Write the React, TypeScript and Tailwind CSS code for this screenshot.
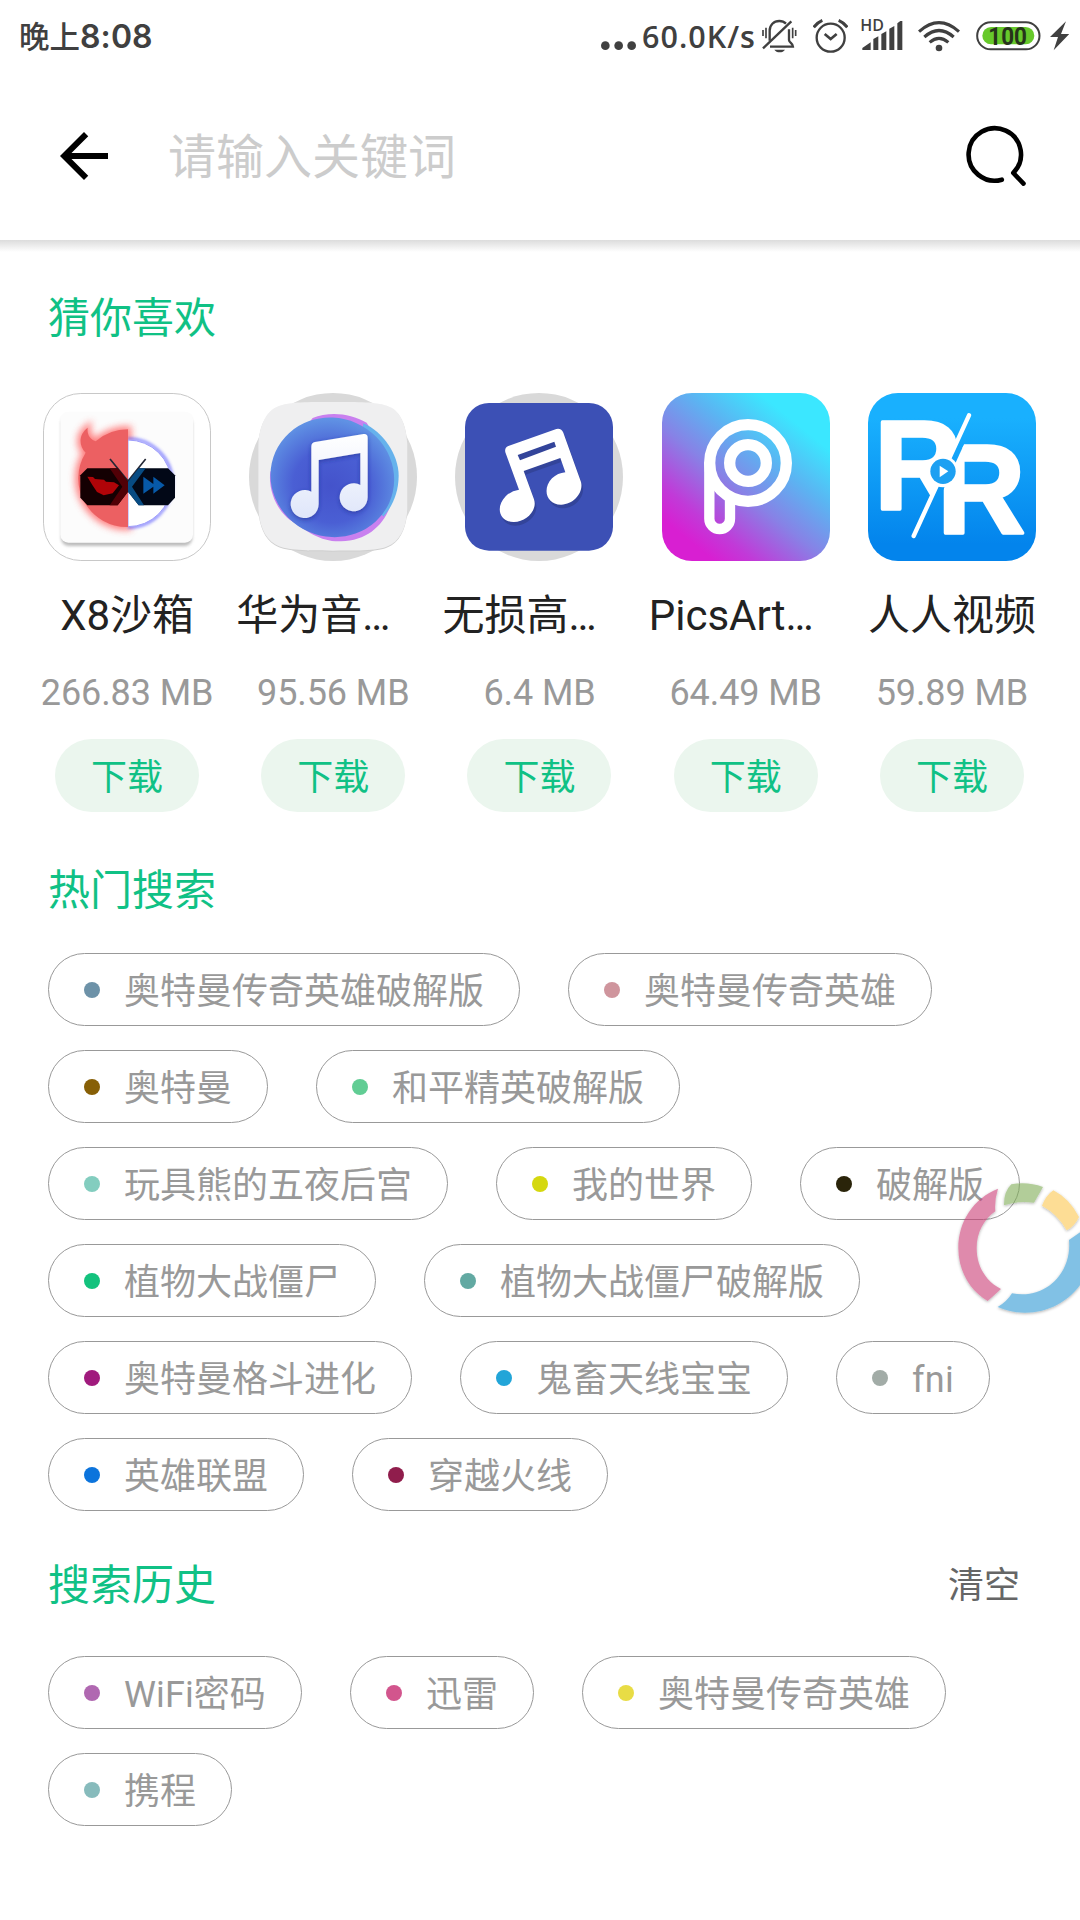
import React from "react";

const CJK = "font-['Roboto','Noto_Sans_CJK_SC',sans-serif]";

function StatusBar() {
  return (
    <div className="flex h-[72px] items-start pt-[18px] pl-[19px] pr-[11px] text-[#404040]">
      <div className="flex h-9 items-center whitespace-nowrap pt-0.5 font-['Inter','Noto_Sans_CJK_SC',sans-serif] font-medium">
        <span className="text-[30.500px] leading-9">晚上</span>
        <span className="text-[32px] font-semibold leading-9 tracking-[0.1px]">8:08</span>
      </div>
      <div className="ml-auto flex h-9 items-center">
        <svg className="mr-1.5 h-9 w-[35px]" viewBox="65 54 105 108" fill="currentColor">
          <circle cx="78" cy="137" r="13" />
          <circle cx="118" cy="137" r="13" />
          <circle cx="157" cy="137" r="13" />
        </svg>
        <span className="w-[112px] whitespace-nowrap font-['Open_Sans',sans-serif] text-[30.500px] font-semibold leading-9 tracking-[1px]">60.0K/s</span>
        <svg className="ml-2 h-9 w-[35px]" viewBox="548 54 105 108" fill="none" stroke="currentColor" strokeWidth="7">
          <path d="M571 122V92c0-17 12-29 29-29 8 0 15 3 20 8" />
          <path d="M551 145 636 64" />
          <path d="M629 88v32c0 8 12 10 12 20H572" />
          <path d="M585 149h32c-3 5-9 8-16 8s-13-3-16-8z" fill="currentColor" stroke="none" />
          <path d="M551 90v18M560 83v32M640 83v32M649 90v18" strokeWidth="5" />
        </svg>
        <svg className="ml-4 h-9 w-[35px]" viewBox="700 54 105 108" fill="none" stroke="currentColor" strokeWidth="7">
          <circle cx="753" cy="113" r="42" />
          <path d="M735 102 753 117 771 102" strokeWidth="8" />
          <path d="M702 82Q712 68 728 61M777 61Q793 68 803 82" strokeWidth="9" />
        </svg>
        <svg className="ml-[13px] h-9 w-[42px] overflow-visible" viewBox="842 54 126 108" fill="currentColor">
          <text x="840" y="93" fontSize="46" fontWeight="600" fontFamily="Open Sans" textLength="71" lengthAdjust="spacingAndGlyphs">HD</text>
          <path d="M846 150v-6l25-17v23zM879 150v-33l15-8v41zM903 150v-48l15-8v56zM927 150V86l15-8v72zM951 150V70l9-7h6v87z" />
        </svg>
        <svg className="ml-[15px] h-9 w-[42px]" viewBox="1014 54 126 108" fill="none" stroke="currentColor" strokeWidth="9.5">
          <path d="M1017 95Q1077 41 1137 95" />
          <path d="M1033 111Q1077 72 1121 111" />
          <path d="M1049 127Q1077 103 1105 127" />
          <circle cx="1077" cy="144" r="10" fill="currentColor" stroke="none" />
        </svg>
        <svg className="ml-4 h-9 w-[65px]" viewBox="1187 54 195 108">
          <rect x="1190.500" y="67" width="187" height="81" rx="40.500" fill="#fff" stroke="currentColor" strokeWidth="6" />
          <rect x="1206" y="81" width="156" height="52" rx="26" fill="#67c92b" />
          <text x="1224" y="134" fontSize="77" fontWeight="700" fontFamily="Roboto" fill="#26341b" textLength="116" lengthAdjust="spacingAndGlyphs">100</text>
        </svg>
        <svg className="ml-[9px] h-9 w-[19px]" viewBox="1410 54 57 108" fill="currentColor">
          <path d="M1458 64 1410 111h24l-13 40 47-49h-25z" />
        </svg>
      </div>
    </div>
  );
}

function Header() {
  return (
    <header className="flex h-[168px] items-start pt-12 pl-12">
      <svg className="size-[72px]" viewBox="0 0 24 24" fill="#000">
        <path d="M20 11H7.830l5.590-5.590L12 4l-8 8 8 8 1.410-1.410L7.830 13H20v-2z" />
      </svg>
      <div className="ml-12 text-5xl leading-[76px] text-[#cccccc]">请输入关键词</div>
      <svg className="ml-auto mr-12 size-[72px]" viewBox="960 120 72 72" fill="none" stroke="#000" strokeWidth="4.600" strokeLinecap="round" strokeLinejoin="round">
        <path d="M1001.800 179.700A26.200 26.200 0 1 1 1013.300 173L1023.500 183.600" />
      </svg>
    </header>
  );
}

function SandboxIcon() {
  return (
    <svg className="size-[168px]" viewBox="40 39 504 504">
      <defs>
        <filter id="glow" x="-30%" y="-30%" width="160%" height="160%"><feGaussianBlur stdDeviation="11" /></filter>
        <filter id="soft" x="-30%" y="-30%" width="160%" height="160%"><feGaussianBlur stdDeviation="5" /></filter>
      </defs>
      <rect x="41.500" y="40.500" width="501" height="501" rx="112" fill="#fff" stroke="#c8c8c8" strokeWidth="3" />
      <rect x="94" y="106" width="394" height="392" rx="24" fill="#999" opacity=".65" filter="url(#soft)" />
      <rect x="92" y="95" width="398" height="393" rx="24" fill="#fcfcfc" />
      <path d="M295 148V441A146 146 0 0 1 168 218C148 200 145 165 174 143C172 165 180 177 198 184Q240 148 295 148Z" fill="#ff3838" stroke="#ff5050" strokeWidth="20" opacity=".7" filter="url(#glow)" />
      <path d="M295 177A132 132 0 0 1 295 441" fill="#fff" stroke="#4a4aff" strokeWidth="11" opacity=".6" filter="url(#soft)" />
      <path d="M295 180A130 130 0 0 1 295 440Z" fill="#fff" stroke="#9f9ffb" strokeWidth="3" />
      <path d="M295 148V441A146 146 0 0 1 168 218C148 200 145 165 174 143C172 165 180 177 198 184Q240 148 295 148Z" fill="#ec6062" />
      <path d="M241 237 295 303 348 237" fill="none" stroke="#242836" strokeWidth="5" />
      <path d="M152 286 173 265H264L295 305V335L264 376H173L152 353Z" fill="#140002" />
      <path d="M240 265H264L295 305V335L264 376H240L278 320Z" fill="#510006" />
      <path d="M295 305 327 265H415L436 286V353L415 376H327L295 335Z" fill="#020817" />
      <path d="M327 265H348L307 320 343 376H327L295 335V305Z" fill="#074b83" />
      <path d="M173 290 190 291 196 297 223 299 229 305 253 307 268 316 249 340 222 346 202 336 188 315Z" fill="#b00408" />
      <path d="M341 290 371 312V290L405 316 371 341V320L341 341Z" fill="#0759a8" />
    </svg>
  );
}

function HuaweiMusicIcon() {
  return (
    <svg className="size-[168px]" viewBox="657 39 504 504">
      <defs>
        <radialGradient id="hm" cx="52%" cy="57%" r="56%">
          <stop offset="0" stopColor="#4453cb" />
          <stop offset=".55" stopColor="#4a5fd4" />
          <stop offset="1" stopColor="#6092e4" />
        </radialGradient>
        <linearGradient id="hmn" x1="0" y1="0" x2="0" y2="1">
          <stop offset="0" stopColor="#fff" />
          <stop offset="1" stopColor="#dfe6fa" />
        </linearGradient>
        <filter id="hms" x="-20%" y="-20%" width="140%" height="140%"><feDropShadow dx="0" dy="5" stdDeviation="6" floodColor="#1d2c90" floodOpacity=".6" /></filter>
      </defs>
      <circle cx="909" cy="291" r="252" fill="#d9d9d9" />
      <path d="M909 70C1010 68 1055 70 1085 86C1118 104 1130 150 1132 195V390C1130 430 1118 475 1085 496C1055 515 1010 515 909 515C808 515 765 513 735 496C702 476 688 435 685 390V195C687 150 702 104 735 86C765 70 808 68 909 70Z" fill="#cfcfcf" />
      <path d="M909 66C1010 65 1055 67 1085 83C1118 101 1130 150 1132 192V387C1130 430 1118 472 1085 493C1055 512 1010 512 909 512C808 512 765 510 735 493C702 473 688 432 685 387V192C687 150 702 101 735 83C765 67 808 65 909 66Z" fill="#efeff0" />
      <path d="M848 114C895 94 960 98 1010 128L1060 210 1092 340C1076 420 1025 482 933 484C870 486 835 455 780 420C740 390 714 330 721 275Z" fill="#c980ef" />
      <path d="M1000 130C1060 155 1105 225 1106 285C1106 335 1090 375 1060 410L980 300Z" fill="#66b2ec" />
      <ellipse cx="907" cy="292" rx="187" ry="178" fill="url(#hm)" transform="rotate(24 907 292)" />
      <g filter="url(#hms)">
        <path d="M844 200Q844 188 855 186L1001 162Q1013 161 1013 173V352A42 42 0 1 1 991 315V219L866 240V372A42 42 0 1 1 844 335Z" fill="url(#hmn)" />
      </g>
    </svg>
  );
}

function LosslessIcon() {
  return (
    <svg className="size-[168px]" viewBox="48 39 504 504">
      <circle cx="300" cy="291" r="252" fill="#d9d9d9" />
      <rect x="78" y="69" width="444" height="443" rx="72" fill="#3c50b5" />
      <path transform="translate(5 11)" fill="#33449a" d="M199 217Q196 203 208 198L352 147Q367 144 373 158L426 306C434 337 405 373 367 374C323 375 308 327 339 295Q356 279 379 277L364 234 254 273 285 358C296 390 263 425 225 426C181 427 168 381 200 349Q217 332 240 329Z" />
      <path fill="#fff" fillRule="evenodd" d="M199 217Q196 203 208 198L352 147Q367 144 373 158L426 306C434 337 405 373 367 374C323 375 308 327 339 295Q356 279 379 277L364 234 254 273 285 358C296 390 263 425 225 426C181 427 168 381 200 349Q217 332 240 329ZM236 225 243 241 351 200 346 185Z" />
    </svg>
  );
}

function PicsArtIcon() {
  return (
    <svg className="size-[168px]" viewBox="666 39 504 504">
      <defs>
        <linearGradient id="pa" gradientUnits="userSpaceOnUse" x1="745" y1="480" x2="1045" y2="110">
          <stop offset="0" stopColor="#d81fd2" />
          <stop offset=".16" stopColor="#c13ad8" />
          <stop offset=".45" stopColor="#8782e6" />
          <stop offset=".72" stopColor="#5bb4f2" />
          <stop offset="1" stopColor="#3be7ff" />
        </linearGradient>
      </defs>
      <rect x="666" y="39" width="504" height="504" rx="90" fill="url(#pa)" />
      <g fill="none" stroke="#fff">
        <circle cx="924" cy="249" r="115" strokeWidth="34" />
        <circle cx="924" cy="249" r="55" strokeWidth="34" />
        <path d="M808 249V416A31 31 0 0 0 870 416V350" strokeWidth="31" />
      </g>
    </svg>
  );
}

function RenRenIcon() {
  return (
    <svg className="size-[168px]" viewBox="84 39 504 504">
      <defs>
        <linearGradient id="rr" x1="0" y1="0" x2="0" y2="1">
          <stop offset=".15" stopColor="#19b0fe" />
          <stop offset=".9" stopColor="#0384ec" />
        </linearGradient>
        <clipPath id="rrl"><path d="M84 39H417L208 500H84Z" /></clipPath>
        <clipPath id="rrr"><path d="M394 145H600V500H232Z" /></clipPath>
      </defs>
      <rect x="84" y="39" width="504" height="504" rx="90" fill="url(#rr)" />
      <g fill="#fff" stroke="#fff" strokeWidth="10" strokeLinejoin="round" fontFamily="Liberation Sans" fontWeight="700" fontSize="380">
        <g clipPath="url(#rrl)"><text x="103" y="387" textLength="264" lengthAdjust="spacingAndGlyphs">R</text></g>
        <g clipPath="url(#rrr)"><text x="292" y="458" textLength="264" lengthAdjust="spacingAndGlyphs">R</text></g>
      </g>
      <path d="M387 106 221 468" stroke="#fff" strokeWidth="13" strokeLinecap="round" />
      <circle cx="309" cy="275" r="47" fill="#fff" />
      <circle cx="309" cy="274" r="38" fill="#1da0f2" />
      <path d="M299 257 325 274 299 292Z" fill="#fff" />
    </svg>
  );
}

const apps = [
  { name: "X8沙箱", size: "266.83 MB", icon: <SandboxIcon />, clipped: false },
  { name: "华为音…", size: "95.56 MB", icon: <HuaweiMusicIcon />, clipped: true },
  { name: "无损高…", size: "6.4 MB", icon: <LosslessIcon />, clipped: true },
  { name: "PicsArt…", size: "64.49 MB", icon: <PicsArtIcon />, clipped: true },
  { name: "人人视频", size: "59.89 MB", icon: <RenRenIcon />, clipped: false },
];

const hot = [
  ["奥特曼传奇英雄破解版", "bg-[#6d92a8]"],
  ["奥特曼传奇英雄", "bg-[#cf959d]"],
  ["奥特曼", "bg-[#875f06]"],
  ["和平精英破解版", "bg-[#61cd94]"],
  ["玩具熊的五夜后宫", "bg-[#83cdbf]"],
  ["我的世界", "bg-[#d5d80f]"],
  ["破解版", "bg-[#2a240a]"],
  ["植物大战僵尸", "bg-[#13c27d]"],
  ["植物大战僵尸破解版", "bg-[#62a9a2]"],
  ["奥特曼格斗进化", "bg-[#a01a7d]"],
  ["鬼畜天线宝宝", "bg-[#22a5d8]"],
  ["fni", "bg-[#a2aca7]", "tracking-[0.3px]"],
  ["英雄联盟", "bg-[#0c74dc]"],
  ["穿越火线", "bg-[#901d4c]"],
];

const history = [
  ["WiFi密码", "bg-[#b068b1]", "tracking-[0.1px]"],
  ["迅雷", "bg-[#d2558d]"],
  ["奥特曼传奇英雄", "bg-[#e8dc45]"],
  ["携程", "bg-[#87bbbc]"],
];

function Chips({ items }: { items: string[][] }) {
  return (
    <div className="flex flex-wrap gap-x-12 gap-y-6 px-12">
      {items.map(([label, dot, tracking = ""]) => (
        <div key={label} className="flex h-[73px] items-center gap-6 whitespace-nowrap rounded-[36.5px] border border-[#999999] px-[35px] text-4xl text-[#999999]">
          <span className={`size-4 shrink-0 rounded-full ${dot}`} />
          <span className={`pt-1.5 leading-[65px] ${tracking}`}>{label}</span>
        </div>
      ))}
    </div>
  );
}

function Title({ children }: { children: React.ReactNode }) {
  return <h2 className="pt-1 text-[42px] leading-[56px] text-[#10c185]">{children}</h2>;
}

function FloatingRing() {
  return (
    <svg className="absolute right-0 top-[1175px] h-[146px] w-[127px]" viewBox="519 165 381 438">
      <defs>
        <filter id="ring" x="-20%" y="-20%" width="140%" height="140%"><feDropShadow dx="0" dy="3" stdDeviation="4" floodColor="#000" floodOpacity=".5" /></filter>
      </defs>
      <g opacity=".6" filter="url(#ring)">
        <path d="M654 206C580 235 535 305 535 384C535 452 569 511 623 543L663 507C618 484 590 440 590 384C590 339 611 298 646 274Q643 240 654 206Z" fill="#cb3e76" />
        <path d="M694 193Q742 184 789 201L762 248Q716 241 672 256Q671 215 694 193Z" fill="#7fad57" />
        <path d="M820 211Q869 236 897 291Q884 319 860 331Q835 284 786 257Q798 226 820 211Z" fill="#fcc850" />
        <path d="M653 561C741 600 855 572 910 480V330L867 360C876 454 802 540 696 520Q681 545 653 561Z" fill="#2f99d5" />
      </g>
    </svg>
  );
}

export default function App() {
  return (
    <div className={`relative h-[1920px] w-[1080px] overflow-hidden bg-white ${CJK}`}>
      <StatusBar />
      <Header />
      <div className="h-3 bg-linear-to-b from-[#dcdcdc] to-white" />

      <main>
        <div className="px-12 pt-[35px]"><Title>猜你喜欢</Title></div>
        <section className="grid grid-cols-5 pl-6 pr-[25px] pt-[46px]">
          {apps.map((app) => (
            <div key={app.name} className="flex flex-col items-center">
              {app.icon}
              <div className={`mt-[25px] w-[194px] whitespace-nowrap text-[42px] leading-[60px] text-[#222222] ${app.clipped ? "text-left" : "text-center"}`}>{app.name}</div>
              <div className="mt-[23px] whitespace-nowrap text-4xl leading-[48px] tracking-[-0.1px] text-[#999999]">{app.size}</div>
              <button className="mt-[22px] h-[73px] w-36 rounded-full bg-[#ebf6ee] pt-1.5 text-4xl leading-[67px] text-[#10c185]">下载</button>
            </div>
          ))}
        </section>

        <div className="px-12 pb-[34px] pt-[47px]"><Title>热门搜索</Title></div>
        <Chips items={hot} />

        <div className="flex items-center justify-between pb-[42px] pl-12 pr-[60px] pt-[43px]">
          <Title>搜索历史</Title>
          <span className="pt-1 text-4xl leading-[56px] text-[#666666]">清空</span>
        </div>
        <Chips items={history} />
      </main>
      <FloatingRing />
    </div>
  );
}
